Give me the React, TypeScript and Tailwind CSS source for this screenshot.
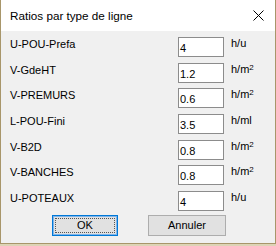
import React from "react";

type Row = { label: string; value: string; unit: React.ReactNode };

const sq = <sup className="-top-[3px] text-[8px]">2</sup>;

const rows: Row[] = [
  { label: "U-POU-Prefa", value: "4", unit: "h/u" },
  { label: "V-GdeHT", value: "1.2", unit: <>h/m{sq}</> },
  { label: "V-PREMURS", value: "0.6", unit: <>h/m{sq}</> },
  { label: "L-POU-Fini", value: "3.5", unit: "h/ml" },
  { label: "V-B2D", value: "0.8", unit: <>h/m{sq}</> },
  { label: "V-BANCHES", value: "0.8", unit: <>h/m{sq}</> },
  { label: "U-POTEAUX", value: "4", unit: "h/u" },
];

export default function App() {
  return (
    <div className="h-[246px] w-[276px] bg-[#ddd3b6] font-['Liberation_Sans',Arial,sans-serif] text-black">
      <div className="flex h-[244px] flex-col border-x border-b border-[#a8966a]">
        {/* title bar */}
        <div className="flex h-[31px] shrink-0 items-center justify-between bg-white pl-[9px] pr-[11px]">
          <span className="text-[11.7px] leading-none">Ratios par type de ligne</span>
          <svg width="11" height="11" viewBox="0 0 11 11" className="text-black">
            <path d="M0.5 0.5 L10.5 10.5 M10.5 0.5 L0.5 10.5" stroke="currentColor" strokeWidth="1" />
          </svg>
        </div>

        {/* body */}
        <div className="flex-1 bg-[#f0f0f0] pl-[9px] pt-[6px]">
          <div className="flex flex-col gap-[5.667px]">
            {rows.map((r) => (
              <div key={r.label} className="flex h-[20px] items-start text-[11px] leading-[13px]">
                <span className="mt-[1px] w-[168px]">{r.label}</span>
                <div className="flex h-[20px] w-[46px] items-center border border-[#8c8c8c] bg-white pl-[1px] pt-[3px]">
                  {r.value}
                </div>
                <span className="ml-[7px]">{r.unit}</span>
              </div>
            ))}
          </div>

          {/* buttons */}
          <div className="mt-[4px] flex gap-[30px] pl-[42px] text-[11px]">
            <button className="flex h-[21px] w-[66px] items-center justify-center border border-[#0078d7] bg-[#e1e1e1] p-[2px] shadow-[inset_0_0_0_1px_#7eb4ea]">
              <span className="flex h-full w-full items-center justify-center border border-dotted border-[#555]">OK</span>
            </button>
            <button className="flex h-[21px] w-[78px] items-center justify-center border border-[#adadad] bg-[#e1e1e1]">
              Annuler
            </button>
          </div>
        </div>
      </div>
    </div>
  );
}
